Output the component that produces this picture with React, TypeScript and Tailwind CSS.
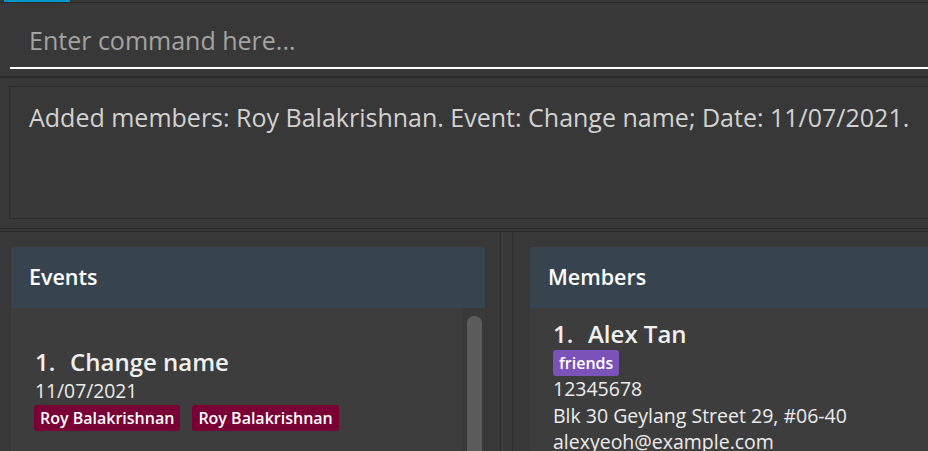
const font = { fontFamily: '"Open Sans", "Noto Sans", sans-serif' }

const Tag = ({ label, color }: { label: string; color: string }) => (
  <span className={`inline-flex items-center h-[26px] px-[6px] rounded-[3px] text-[16px] font-semibold text-white ${color}`}>
    {label}
  </span>
)

const EventCard = () => (
  <div className="pl-[24px] pt-[38px]">
    <div className="flex items-center h-[32px] text-[24px] font-semibold text-[#f0f0f0]">
      <span className="w-[35px]">1.</span>
      <span>Change name</span>
    </div>
    <div className="h-[26px] leading-[26px] text-[19.3px] text-[#ececec]">11/07/2021</div>
    <div className="flex gap-[12px] -ml-[1px] mt-[1px]">
      <Tag label="Roy Balakrishnan" color="bg-[#780035]" />
      <Tag label="Roy Balakrishnan" color="bg-[#780035]" />
    </div>
  </div>
)

const MemberCard = () => (
  <div className="pl-[23px] pt-[10px]">
    <div className="flex items-center h-[32px] text-[24px] font-semibold text-[#f0f0f0]">
      <span className="w-[35px]">1.</span>
      <span>Alex Tan</span>
    </div>
    <div className="flex">
      <Tag label="friends" color="bg-[#7a52b8]" />
    </div>
    <div className="text-[19.5px] leading-[26.5px] text-[#ececec] whitespace-nowrap">
      <div>12345678</div>
      <div>Blk 30 Geylang Street 29, #06-40</div>
      <div>alexyeoh@example.com</div>
    </div>
  </div>
)

export default function App() {
  return (
    <div className="w-[928px] h-[451px] overflow-hidden bg-[#383838] flex flex-col" style={font}>
      <div className="h-[2px] shrink-0 flex">
        <div className="ml-[4px] w-[66px] bg-[#0096c9]" />
      </div>
      <div className="h-[1px] shrink-0 bg-[#2b2b2b]" />

      <div className="h-[73px] shrink-0 pl-[10px] pt-[13px]">
        <div className="h-[53px] border-b-2 border-white flex items-center pl-[19px] pb-[2px] text-[25px] text-[#a3a3a3]">
          Enter command here...
        </div>
      </div>
      <div className="h-[2px] shrink-0 bg-[#2d2d2d]" />

      <div className="h-[150px] shrink-0 pl-[9px] pt-[8px]">
        <div className="h-[133px] border border-r-0 border-[#2c2c2c] pl-[19px] pt-[12px] text-[25px] text-[#d2d2d2] whitespace-nowrap">
          Added members: Roy Balakrishnan. Event: Change name; Date: 11/07/2021.
        </div>
      </div>

      <div className="h-[1px] shrink-0 bg-[#2c2c2c]" />
      <div className="h-[2px] shrink-0" />
      <div className="h-[1px] shrink-0 bg-[#2c2c2c]" />

      <div className="flex-1 flex min-h-0">
        <div className="w-[500px] pl-[11px] pt-[15px] flex flex-col">
          <div className="w-[474px] h-[61px] shrink-0 bg-[#37444f] flex items-center pl-[18px] text-[21.5px] font-semibold text-white">
            Events
          </div>
          <div className="w-[474px] flex-1 min-h-0 overflow-hidden bg-[#3d3d3e] flex">
            <div className="flex-1">
              <EventCard />
            </div>
            <div className="w-[23px] bg-[#393939] pl-[5px] pt-[8px]">
              <div className="w-[15px] h-[200px] rounded-t-[7px] bg-[#5b5b5b]" />
            </div>
          </div>
        </div>
        <div className="w-[13px] border-l border-r border-[#2c2c2c] flex">
          <div className="w-[1px] ml-[1px] bg-[#444444]" />
        </div>
        <div className="flex-1 pl-[17px] pt-[15px] flex flex-col">
          <div className="h-[61px] shrink-0 bg-[#37444f] flex items-center pl-[18px] text-[21.5px] font-semibold text-white">
            Members
          </div>
          <div className="flex-1 min-h-0 overflow-hidden bg-[#3d3d3e]">
            <MemberCard />
          </div>
        </div>
      </div>
    </div>
  )
}
